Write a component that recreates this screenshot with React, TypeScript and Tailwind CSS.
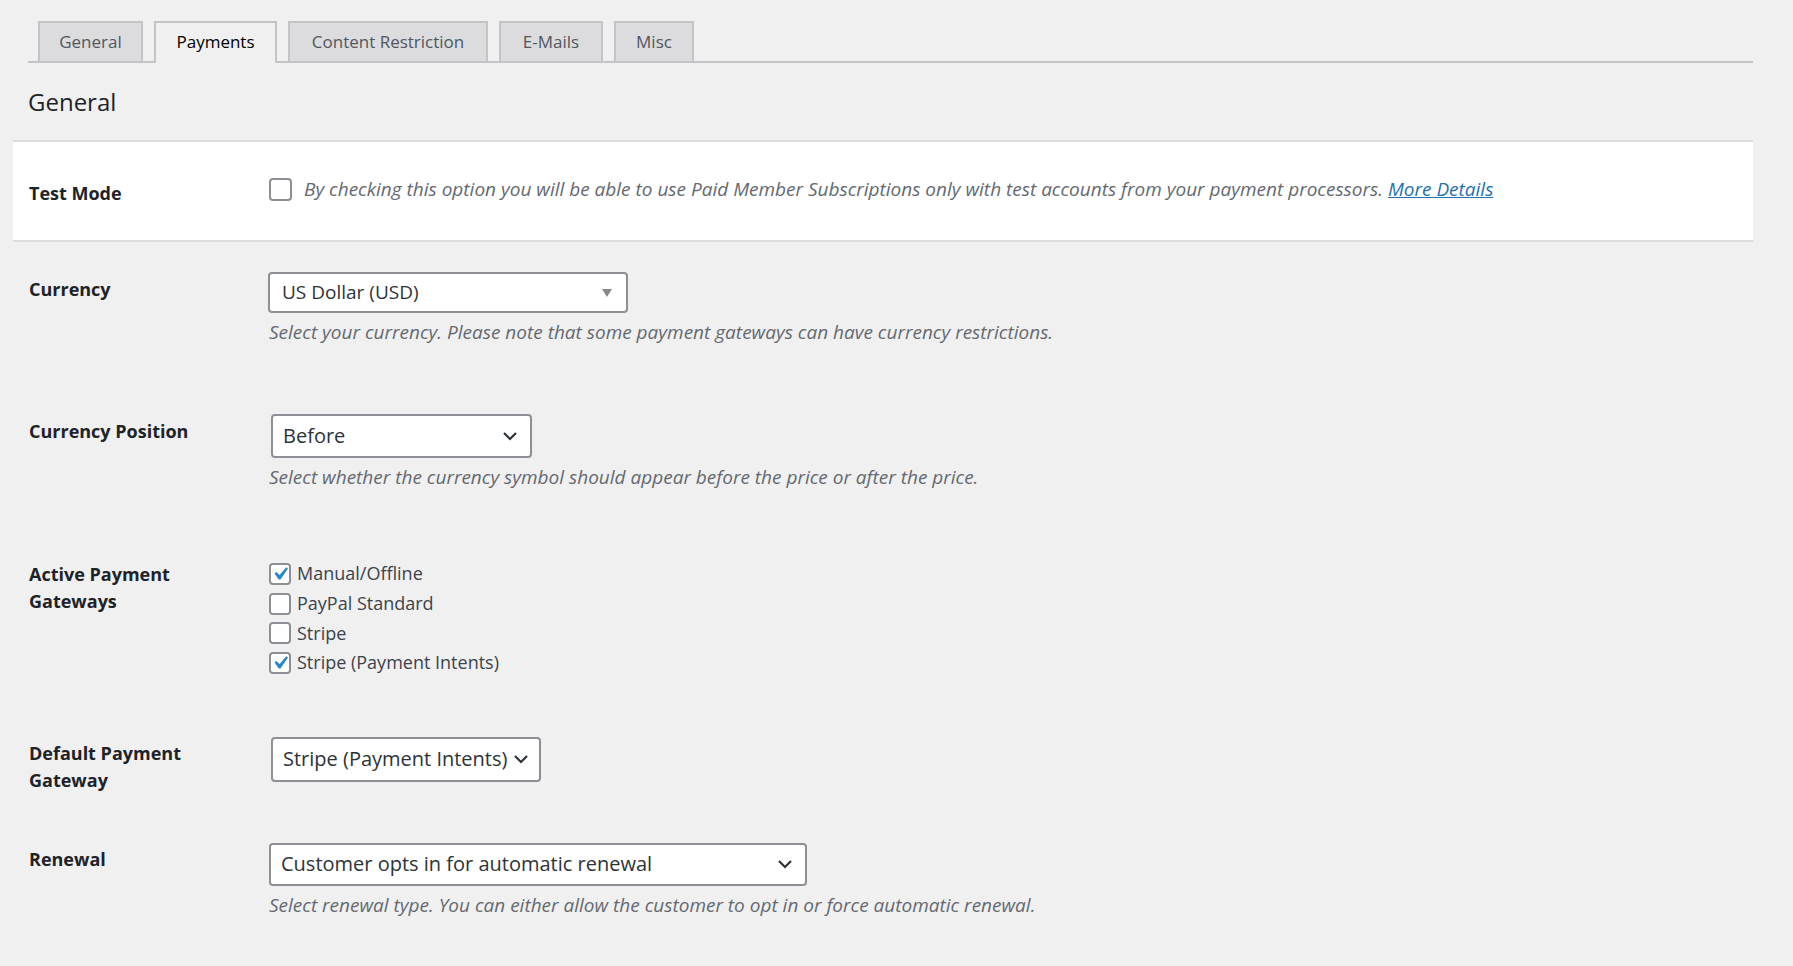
import { ReactNode } from 'react';

const tabs = [
    { name: 'General', w: 'w-[105px]' },
    { name: 'Payments', w: 'w-[123px]' },
    { name: 'Content Restriction', w: 'w-[200px]' },
    { name: 'E-Mails', w: 'w-[104px]' },
    { name: 'Misc', w: 'w-[80px]' }
];

function Checkbox({ checked, className }: { checked?: boolean; className: string }) {
    return (
        <span className={`relative inline-block shrink-0 rounded-[4px] border-2 border-[#8c8f94] bg-white ${className}`}>
            {checked && (
                <svg viewBox="0 0 20 20" className="absolute -left-[4px] -top-[4px] h-[26px] w-[26px]">
                    <path d="M14.83 4.89l1.34.94-5.81 8.38H9.02L5.78 9.67l1.34-1.25 2.57 2.4z" fill="#2a86c4" />
                </svg>
            )}
        </span>
    );
}

function Chevron() {
    return (
        <svg viewBox="0 0 16 10" className="h-[10px] w-[16px]">
            <path d="M2 2l6 6 6-6" fill="none" stroke="#2c3338" strokeWidth="2.2" />
        </svg>
    );
}

function Select({ value, className, triangle }: { value: string; className: string; triangle?: boolean }) {
    return (
        <div className={`flex items-center justify-between rounded-[4px] border-2 border-[#8c8f94] bg-white ${className}`}>
            <span className="whitespace-nowrap text-[#2c3338]">{value}</span>
            {triangle ? (
                <svg viewBox="0 0 10 8" className="h-[8px] w-[10px]">
                    <path d="M0 0h10L5 8z" fill="#888" />
                </svg>
            ) : (
                <Chevron />
            )}
        </div>
    );
}

function Row({ label, children, className, labelClass }: { label: ReactNode; children: ReactNode; className: string; labelClass: string }) {
    return (
        <div className={`flex ${className}`}>
            <div className={`w-[256px] shrink-0 pl-[16px] text-[18px] font-bold text-[#1d2327] ${labelClass}`}>{label}</div>
            <div className="flex flex-col">{children}</div>
        </div>
    );
}

function Help({ children }: { children: ReactNode }) {
    return <p className="mt-[7px] text-[19px] italic leading-[24px] text-[#646970]">{children}</p>;
}

export default function App() {
    const gateways = [
        { name: 'Manual/Offline', on: true },
        { name: 'PayPal Standard', on: false },
        { name: 'Stripe', on: false },
        { name: 'Stripe (Payment Intents)', on: true }
    ];

    return (
        <div className="min-h-screen bg-[#f0f0f1] font-['Open_Sans',sans-serif] text-[#3c434a]">
            <div className="ml-[13px] w-[1740px] pt-[21px] pb-[60px]">
                <nav className="ml-[15px] flex items-end gap-[11px] border-b-2 border-[#c3c4c7] pl-[10px]">
                    {tabs.map(t =>
                        t.name === 'Payments' ? (
                            <div
                                key={t.name}
                                className={`-mb-[2px] flex h-[42px] items-center justify-center border-2 border-b-0 border-[#c3c4c7] bg-[#f0f0f1] pb-[2px] text-[17px] font-medium text-[#000] ${t.w}`}
                            >
                                {t.name}
                            </div>
                        ) : (
                            <div
                                key={t.name}
                                className={`flex h-[40px] items-center justify-center border-2 border-b-0 border-[#c3c4c7] bg-[#dcdcde] text-[17px] font-medium text-[#50575e] ${t.w}`}
                            >
                                {t.name}
                            </div>
                        )
                    )}
                </nav>

                <h2 className="mt-[23px] mb-[22px] pl-[15px] text-[24px] font-medium leading-[32px] text-[#1d2327]">General</h2>

                <div className="flex h-[102px] items-center border-y-2 border-[#dcdcde] bg-white">
                    <div className="w-[256px] shrink-0 pl-[16px] pt-[4px] text-[18px] font-bold text-[#1d2327]">Test Mode</div>
                    <div className="flex items-center gap-[12px] pb-[3px]">
                        <Checkbox className="h-[23px] w-[23px]" />
                        <p className="text-[19px] italic text-[#646970]">
                            By checking this option you will be able to use Paid Member Subscriptions only with test accounts from your payment processors.{' '}
                            <a className="text-[#2271b1] underline">More Details</a>
                        </p>
                    </div>
                </div>

                <Row label="Currency" className="mt-[30px]" labelClass="pt-[5px] leading-[24px]">
                    <Select value="US Dollar (USD)" triangle className="-ml-[1px] h-[41px] w-[360px] pl-[12px] pr-[14px] text-[19px]" />
                    <Help>Select your currency. Please note that some payment gateways can have currency restrictions.</Help>
                </Row>

                <Row label="Currency Position" className="mt-[70px]" labelClass="pt-[5px] leading-[24px]">
                    <Select value="Before" className="ml-[2px] h-[44px] w-[261px] pl-[10px] pr-[12px] text-[20px]" />
                    <Help>Select whether the currency symbol should appear before the price or after the price.</Help>
                </Row>

                <Row label={<>Active Payment<br />Gateways</>} className="mt-[70px]" labelClass="pt-[2px] leading-[27px]">
                    {gateways.map(g => (
                        <label key={g.name} className="flex h-[29.7px] items-center gap-[6px] text-[18px] text-[#3c434a]">
                            <Checkbox checked={g.on} className="h-[22px] w-[22px]" />
                            {g.name}
                        </label>
                    ))}
                </Row>

                <Row label={<>Default Payment<br />Gateway</>} className="mt-[59px]" labelClass="pt-[3px] leading-[27px]">
                    <Select value="Stripe (Payment Intents)" className="ml-[2px] h-[45px] w-[270px] pl-[10px] pr-[10px] text-[20px]" />
                </Row>

                <Row label="Renewal" className="mt-[49px]" labelClass="pt-[4px] leading-[24px]">
                    <Select value="Customer opts in for automatic renewal" className="h-[43px] w-[538px] pl-[10px] pr-[12px] text-[20px]" />
                    <Help>Select renewal type. You can either allow the customer to opt in or force automatic renewal.</Help>
                </Row>
            </div>
        </div>
    );
}
